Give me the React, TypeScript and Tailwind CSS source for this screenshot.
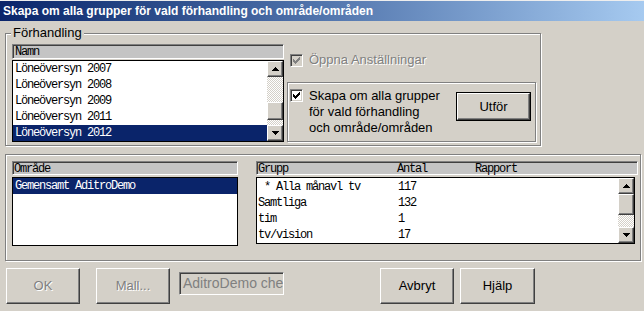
import React from 'react';

const raised =
  'border border-t-white border-l-white border-r-[#404040] border-b-[#404040] shadow-[inset_-1px_-1px_0_#808080] bg-[#d4d0c8]';
const sunken =
  'border border-t-[#808080] border-l-[#808080] border-r-white border-b-white shadow-[inset_1px_1px_0_#404040,inset_-1px_-1px_0_#d4d0c8]';
const etched = 'border border-[#808080] shadow-[inset_1px_1px_0_#fff,1px_1px_0_#fff]';
const mono = "font-['Liberation_Mono','Courier_New',monospace] text-[12px] tracking-[-1.2px]";
const header =
  'border border-t-[#808080] border-l-[#808080] border-b-white border-r-white shadow-[inset_1px_1px_0_#404040] bg-[#c4c4c4]';

// classic 7x7 check, each column 3px tall
const checkCols = [2, 3, 4, 3, 2, 1, 0];

function CheckBox({ disabled }: { disabled?: boolean }) {
  return (
    <div className={`w-[13px] h-[13px] shrink-0 ${sunken} ${disabled ? 'bg-[#d4d0c8]' : 'bg-white'}`}>
      <svg width="11" height="11" viewBox="0 0 11 11" shapeRendering="crispEdges">
        {checkCols.map((y, x) => (
          <rect key={x} x={x + 2} y={y + 2} width="1" height="3" fill={disabled ? '#808080' : '#000'} />
        ))}
      </svg>
    </div>
  );
}

function Arrow({ down }: { down?: boolean }) {
  const rows = down ? [0, 1, 2, 3].reverse() : [0, 1, 2, 3];
  return (
    <svg width="7" height="4" viewBox="0 0 7 4" shapeRendering="crispEdges">
      {rows.map((r, i) => (
        <rect key={i} x={3 - r} y={i} width={r * 2 + 1} height="1" fill="#000" />
      ))}
    </svg>
  );
}

function ScrollBar({ above, thumb }: { above: number; thumb: number }) {
  const checker = 'bg-[repeating-conic-gradient(#fff_0_25%,#d4d0c8_0_50%)] bg-size-[2px_2px]';
  return (
    <div className="w-[16px] h-full flex flex-col shrink-0">
      <div className={`h-[16px] flex items-center justify-center ${raised}`}>
        <Arrow />
      </div>
      <div className={checker} style={{ height: above }} />
      <div className={raised} style={{ height: thumb }} />
      <div className={`flex-1 ${checker}`} />
      <div className={`h-[16px] flex items-center justify-center ${raised}`}>
        <Arrow down />
      </div>
    </div>
  );
}

function Button({ label, disabled, className }: { label: string; disabled?: boolean; className: string }) {
  return (
    <div
      className={`flex items-center justify-center shrink-0 ${raised} ${className} ${
        disabled ? 'text-[#808080] [text-shadow:1px_1px_0_#fff]' : 'text-black'
      }`}
    >
      {label}
    </div>
  );
}

const names = ['Löneöversyn 2007', 'Löneöversyn 2008', 'Löneöversyn 2009', 'Löneöversyn 2011', 'Löneöversyn 2012'];
const groups = [
  { name: ' * Alla månavl tv', count: '117' },
  { name: 'Samtliga', count: '132' },
  { name: 'tim', count: '1' },
  { name: 'tv/vision', count: '17' },
];

export default function App() {
  return (
    <div className="w-[644px] h-[311px] bg-[#d4d0c8] overflow-hidden font-['Liberation_Sans',Arial,sans-serif] text-[13px] leading-[16px] text-black">
      <div className="h-[21px] border-t border-[#eeeeee] bg-linear-to-r from-[#0a246a] to-[#a6caf0] text-white font-bold text-[12px] leading-[20px] pl-[3px] whitespace-nowrap">
        Skapa om alla grupper för vald förhandling och område/områden
      </div>

      {/* Förhandling */}
      <div className={`relative mt-[12px] ml-[5px] w-[536px] h-[113px] ${etched} flex pl-[6px] pt-[10px]`}>
        <div className="absolute left-[5px] top-[-9px] px-[2px] bg-[#d4d0c8]">Förhandling</div>

        <div className="w-[272px] flex flex-col">
          <div className={`h-[15px] ${header} ${mono} leading-[11px] pt-[2px] pl-[2px]`}>Namn</div>
          <div className="mt-[1px] h-[82px] border border-black bg-white flex">
            <div className="flex-1">
              {names.map((n, i) => (
                <div
                  key={n}
                  className={`h-[16px] ${mono} leading-[16px] pl-[2px] ${
                    i === names.length - 1 ? 'bg-[#0a246a] text-white' : ''
                  }`}
                >
                  {n}
                </div>
              ))}
            </div>
            <ScrollBar above={25} thumb={18} />
          </div>
        </div>

        <div className="ml-[3px] w-[249px] flex flex-col">
          <div className="mt-[8px] h-[16px] pl-[3px] flex items-center">
            <CheckBox disabled />
            <span className="ml-[6px] text-[#808080] [text-shadow:1px_1px_0_#fff]">Öppna Anställningar</span>
          </div>
          <div className={`mt-[14px] h-[60px] ${etched} flex pl-[2px] pt-[5px]`}>
            <div className="mt-[1px]">
              <CheckBox />
            </div>
            <div className="ml-[6px]">
              Skapa om alla grupper
              <br />
              för vald förhandling
              <br />
              och område/områden
            </div>
            <div className="ml-auto mr-[4px] mt-[4px] border border-black h-[29px]">
              <Button label="Utför" className="w-[73px] h-[27px]" />
            </div>
          </div>
        </div>
      </div>

      {/* Område / Grupp */}
      <div className={`mt-[8px] ml-[5px] w-[636px] h-[107px] ${etched} flex pl-[6px] pt-[6px]`}>
        <div className="w-[226px] flex flex-col">
          <div className={`h-[14px] ${header} ${mono} leading-[11px] pt-[2px] pl-[1px]`}>Område</div>
          <div className="mt-[2px] h-[69px] border border-black bg-white">
            <div className={`h-[16px] ${mono} leading-[16px] pl-[2px] bg-[#0a246a] text-white`}>
              Gemensamt AditroDemo
            </div>
          </div>
        </div>

        <div className="ml-[18px] w-[379px] flex flex-col">
          <div className={`h-[14px] w-[382px] ${header} ${mono} leading-[11px] pt-[2px] pl-[1px] flex whitespace-pre`}>
            <span className="w-[139px]">Grupp</span>
            <span className="w-[78px]">Antal</span>
            <span>Rapport</span>
          </div>
          <div className="mt-[2px] h-[67px] border border-black bg-white flex">
            <div className="flex-1 pt-[1px]">
              {groups.map((g) => (
                <div key={g.name} className={`h-[16px] flex ${mono} leading-[16px] pl-[1px] whitespace-pre`}>
                  <span className="w-[140px]">{g.name}</span>
                  <span>{g.count}</span>
                </div>
              ))}
            </div>
            <ScrollBar above={0} thumb={21} />
          </div>
        </div>
      </div>

      {/* Buttons */}
      <div className="mt-[7px] flex items-start">
        <Button label="OK" disabled className="ml-[6px] w-[74px] h-[36px]" />
        <Button label="Mall..." disabled className="ml-[16px] w-[74px] h-[36px]" />
        <div
          className={`ml-[9px] mt-[4px] w-[105px] h-[23px] ${sunken} bg-[#d4d0c8] text-[#808080] text-[14px] pl-[3px] leading-[20px] overflow-hidden whitespace-nowrap`}
        >
          AditroDemo chef
        </div>
        <Button label="Avbryt" className="ml-[96px] w-[74px] h-[36px]" />
        <Button label="Hjälp" className="ml-[6px] w-[75px] h-[36px]" />
      </div>
    </div>
  );
}
